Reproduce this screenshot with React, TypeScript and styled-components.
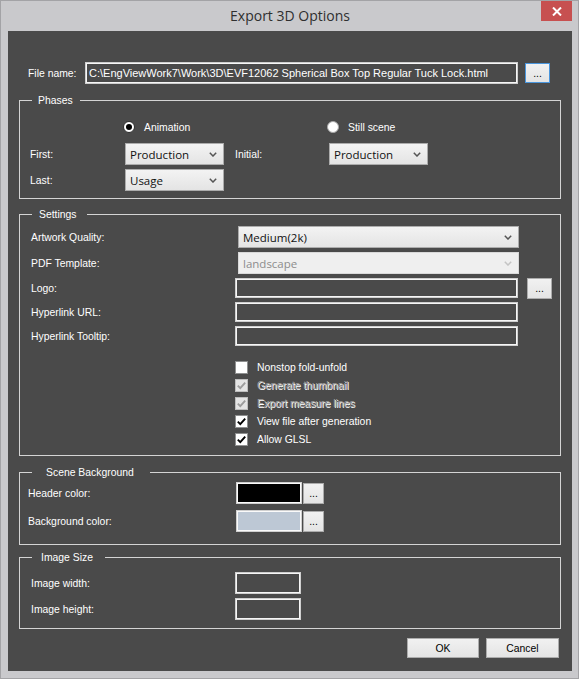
import styled, { createGlobalStyle } from 'styled-components';

const ui = `'Liberation Sans', Arial, sans-serif`;
const seg = `'Open Sans', 'Noto Sans', sans-serif`;

const GlobalStyle = createGlobalStyle`
  html, body {
    margin: 0;
    padding: 0;
    background: #fff;
  }
  body {
    width: 579px;
    height: 679px;
    overflow: hidden;
  }
  * {
    box-sizing: border-box;
  }
`;

const Window = styled.div`
  width: 579px;
  height: 679px;
  display: flex;
  flex-direction: column;
  background: #c9c9cc;
  border: 1px solid #a3a3a6;
  padding: 0 6px 7px 7px;
`;

const TitleBar = styled.div`
  height: 30px;
  flex: none;
  display: grid;
  grid-template-columns: 1fr auto 1fr;
  align-items: start;
`;

const Title = styled.div`
  grid-column: 2;
  font: 14px ${seg};
  line-height: 30px;
  color: #2f2f2f;
`;

const CloseButton = styled.button`
  grid-column: 3;
  justify-self: end;
  width: 31px;
  height: 20px;
  border: 0;
  padding: 0;
  background: #c75050;
  display: flex;
  align-items: center;
  justify-content: center;
`;

const Client = styled.div`
  flex: 1;
  background: #4a4a4a;
  padding: 31px 11px 13px 11px;
  display: flex;
  flex-direction: column;
  font: 10.4px ${ui};
  color: #fff;
`;

const FileRow = styled.div`
  display: flex;
  align-items: center;
  gap: 7px;
  height: 22px;
  padding: 0 11px 0 9px;
`;

const FileLabel = styled.span`
  width: 50px;
  flex: none;
`;

const TextBox = styled.div<{ $h?: number; $grow?: boolean }>`
  height: ${(p) => p.$h ?? 20}px;
  flex: ${(p) => (p.$grow ? 1 : 'none')};
  border: 1px solid #cfcfcf;
  box-shadow: inset 0 0 0 1px #f6f6f6;
  padding: 0 3px;
  display: flex;
  align-items: center;
  color: #fff;
  white-space: nowrap;
  overflow: hidden;
`;

const PathText = styled.span`
  font-size: 11px;
`;

const PushButton = styled.button<{ $w: number; $h?: number; $focus?: boolean }>`
  width: ${(p) => p.$w}px;
  height: ${(p) => p.$h ?? 20}px;
  flex: none;
  padding: 0;
  border: 1px solid ${(p) => (p.$focus ? '#4a96dd' : '#acacac')};
  background: linear-gradient(#f1f1f1, #e4e4e4);
  font: 10.4px ${ui};
  color: #000;
`;

const Group = styled.fieldset<{ $mt: number }>`
  margin: ${(p) => p.$mt}px 0 0;
  padding: 0;
  min-width: 0;
  border: 1px solid #d4d4d4;
`;

const Legend = styled.legend<{ $pl: number; $pr: number }>`
  margin-left: 12px;
  padding: 0 ${(p) => p.$pr}px 0 ${(p) => p.$pl}px;
  font: 10.4px ${ui};
  line-height: 13px;
  height: 13px;
  color: #fff;
`;

const GroupBody = styled.div<{ $pad: string; $cols: string; $rows: string; $rowGap?: number; $colGap?: number }>`
  display: grid;
  padding: ${(p) => p.$pad};
  grid-template-columns: ${(p) => p.$cols};
  grid-template-rows: ${(p) => p.$rows};
  row-gap: ${(p) => p.$rowGap ?? 4}px;
  column-gap: ${(p) => p.$colGap ?? 0}px;
  align-items: center;
`;

const Combo = styled.div<{ $disabled?: boolean }>`
  height: 22px;
  display: flex;
  align-items: center;
  justify-content: space-between;
  padding: 0 6px 0 4px;
  border: 1px solid ${(p) => (p.$disabled ? '#d9d9d9' : '#acacac')};
  background: ${(p) => (p.$disabled ? '#efefef' : 'linear-gradient(#f3f3f3, #e4e4e4)')};
  color: ${(p) => (p.$disabled ? '#8d8d8d' : '#111')};
  font: 11.5px ${seg};
`;

const WideCombo = styled(Combo)`
  margin: 0 -1px 0 3px;
`;

const RadioOption = styled.label`
  display: flex;
  align-items: center;
  gap: 9px;
  margin-left: -2px;
`;

const RadioDot = styled.span<{ $on?: boolean }>`
  width: 12px;
  height: 12px;
  flex: none;
  border-radius: 50%;
  background: #fff;
  border: 1px solid ${(p) => (p.$on ? '#2c2c2c' : '#a8a8a8')};
  display: flex;
  align-items: center;
  justify-content: center;

  &::after {
    content: '';
    width: 6px;
    height: 6px;
    border-radius: 50%;
    background: ${(p) => (p.$on ? '#000' : 'transparent')};
  }
`;

const CheckList = styled.div`
  grid-column: 2;
  margin-top: 8px;
  display: flex;
  flex-direction: column;
`;

const CheckRow = styled.div`
  display: flex;
  align-items: center;
  gap: 9px;
  height: 18px;
`;

const CheckBox = styled.span<{ $disabled?: boolean }>`
  width: 13px;
  height: 13px;
  flex: none;
  border: 1px solid ${(p) => (p.$disabled ? '#bdbdbd' : '#8e8f8f')};
  background: ${(p) => (p.$disabled ? '#e4e4e4' : '#fff')};
  display: flex;
  align-items: center;
  justify-content: center;
`;

const CheckText = styled.span<{ $disabled?: boolean }>`
  color: ${(p) => (p.$disabled ? '#a0a0a0' : '#fff')};
  text-shadow: ${(p) => (p.$disabled ? '1px 1px 0 #fff' : 'none')};
`;

const Swatch = styled.div<{ $color: string }>`
  height: 22px;
  border: 1px solid #d0d0d0;
  box-shadow: inset 0 0 0 1px #fafafa;
  background: ${(p) => p.$color};
`;

const Footer = styled.div`
  margin-top: 9px;
  display: flex;
  justify-content: flex-end;
  gap: 7px;
  padding-right: 2px;
`;

const Chevron = ({ color }: { color: string }) => (
  <svg width="8" height="5" viewBox="0 0 8 5">
    <polyline points="0.8,0.8 4,4 7.2,0.8" fill="none" stroke={color} strokeWidth="1.5" />
  </svg>
);

const Select = ({ value, disabled }: { value: string; disabled?: boolean }) => (
  <Combo $disabled={disabled}>
    <span>{value}</span>
    <Chevron color={disabled ? '#c4c4c4' : '#555'} />
  </Combo>
);

const WideSelect = ({ value, disabled }: { value: string; disabled?: boolean }) => (
  <WideCombo $disabled={disabled}>
    <span>{value}</span>
    <Chevron color={disabled ? '#c4c4c4' : '#555'} />
  </WideCombo>
);

const Check = ({ label, checked, disabled }: { label: string; checked?: boolean; disabled?: boolean }) => (
  <CheckRow>
    <CheckBox $disabled={disabled}>
      {checked && (
        <svg width="11" height="11" viewBox="0 0 11 11">
          <polyline
            points="1.8,5.6 4.3,8.1 9.2,2.6"
            fill="none"
            stroke={disabled ? '#9c9c9c' : '#000'}
            strokeWidth="1.9"
          />
        </svg>
      )}
    </CheckBox>
    <CheckText $disabled={disabled}>{label}</CheckText>
  </CheckRow>
);

export default function App() {
  return (
    <>
      <GlobalStyle />
      <Window>
        <TitleBar>
          <Title>Export 3D Options</Title>
          <CloseButton>
            <svg width="10" height="9" viewBox="0 0 10 9">
              <path d="M1 0.5 L9 8.5 M9 0.5 L1 8.5" stroke="#fff" strokeWidth="2" />
            </svg>
          </CloseButton>
        </TitleBar>

        <Client>
          <FileRow>
            <FileLabel>File name:</FileLabel>
            <TextBox $h={22} $grow>
              <PathText>C:\EngViewWork7\Work\3D\EVF12062 Spherical Box Top Regular Tuck Lock.html</PathText>
            </TextBox>
            <PushButton $w={25} $focus>
              ...
            </PushButton>
          </FileRow>

          <Group $mt={10}>
            <Legend $pl={6} $pr={7}>Phases</Legend>
            <GroupBody $pad="8px 0 7px 10px" $cols="95px 99px 11px 94px 99px" $rows="24px 22px 22px">
              <span />
              <RadioOption>
                <RadioDot $on />
                Animation
              </RadioOption>
              <span />
              <span />
              <RadioOption>
                <RadioDot />
                Still scene
              </RadioOption>

              <span>First:</span>
              <Select value="Production" />
              <span />
              <span>Initial:</span>
              <Select value="Production" />

              <span>Last:</span>
              <Select value="Usage" />
            </GroupBody>
          </Group>

          <Group $mt={9}>
            <Legend $pl={7} $pr={10}>Settings</Legend>
            <GroupBody $pad="5px 0 7px 11px" $cols="204px 283px 9px 25px" $rows="22px 22px 20px 20px 20px auto">
              <span>Artwork Quality:</span>
              <WideSelect value="Medium(2k)" />
              <span />
              <span />

              <span>PDF Template:</span>
              <WideSelect value="landscape" disabled />
              <span />
              <span />

              <span>Logo:</span>
              <TextBox />
              <span />
              <PushButton $w={25} $h={21}>
                ...
              </PushButton>

              <span>Hyperlink URL:</span>
              <TextBox />
              <span />
              <span />

              <span>Hyperlink Tooltip:</span>
              <TextBox />
              <span />
              <span />

              <span />
              <CheckList>
                <Check label="Nonstop fold-unfold" />
                <Check label="Generate thumbnail" checked disabled />
                <Check label="Export measure lines" checked disabled />
                <Check label="View file after generation" checked />
                <Check label="Allow GLSL" checked />
              </CheckList>
            </GroupBody>
          </Group>

          <Group $mt={10}>
            <Legend $pl={14} $pr={16}>Scene Background</Legend>
            <GroupBody $pad="3px 0 12px 8px" $cols="207px 66px 21px" $rows="22px 22px" $rowGap={6} $colGap={1}>
              <span>Header color:</span>
              <Swatch $color="#000" />
              <PushButton $w={21} $h={21}>
                ...
              </PushButton>

              <span>Background color:</span>
              <Swatch $color="#bdc8d5" />
              <PushButton $w={21} $h={21}>
                ...
              </PushButton>
            </GroupBody>
          </Group>

          <Group $mt={6}>
            <Legend $pl={9} $pr={12}>Image Size</Legend>
            <GroupBody $pad="8px 0 8px 11px" $cols="204px 66px" $rows="22px 22px">
              <span>Image width:</span>
              <TextBox $h={22} />
              <span>Image height:</span>
              <TextBox $h={22} />
            </GroupBody>
          </Group>

          <Footer>
            <PushButton $w={72}>OK</PushButton>
            <PushButton $w={73}>Cancel</PushButton>
          </Footer>
        </Client>
      </Window>
    </>
  );
}
